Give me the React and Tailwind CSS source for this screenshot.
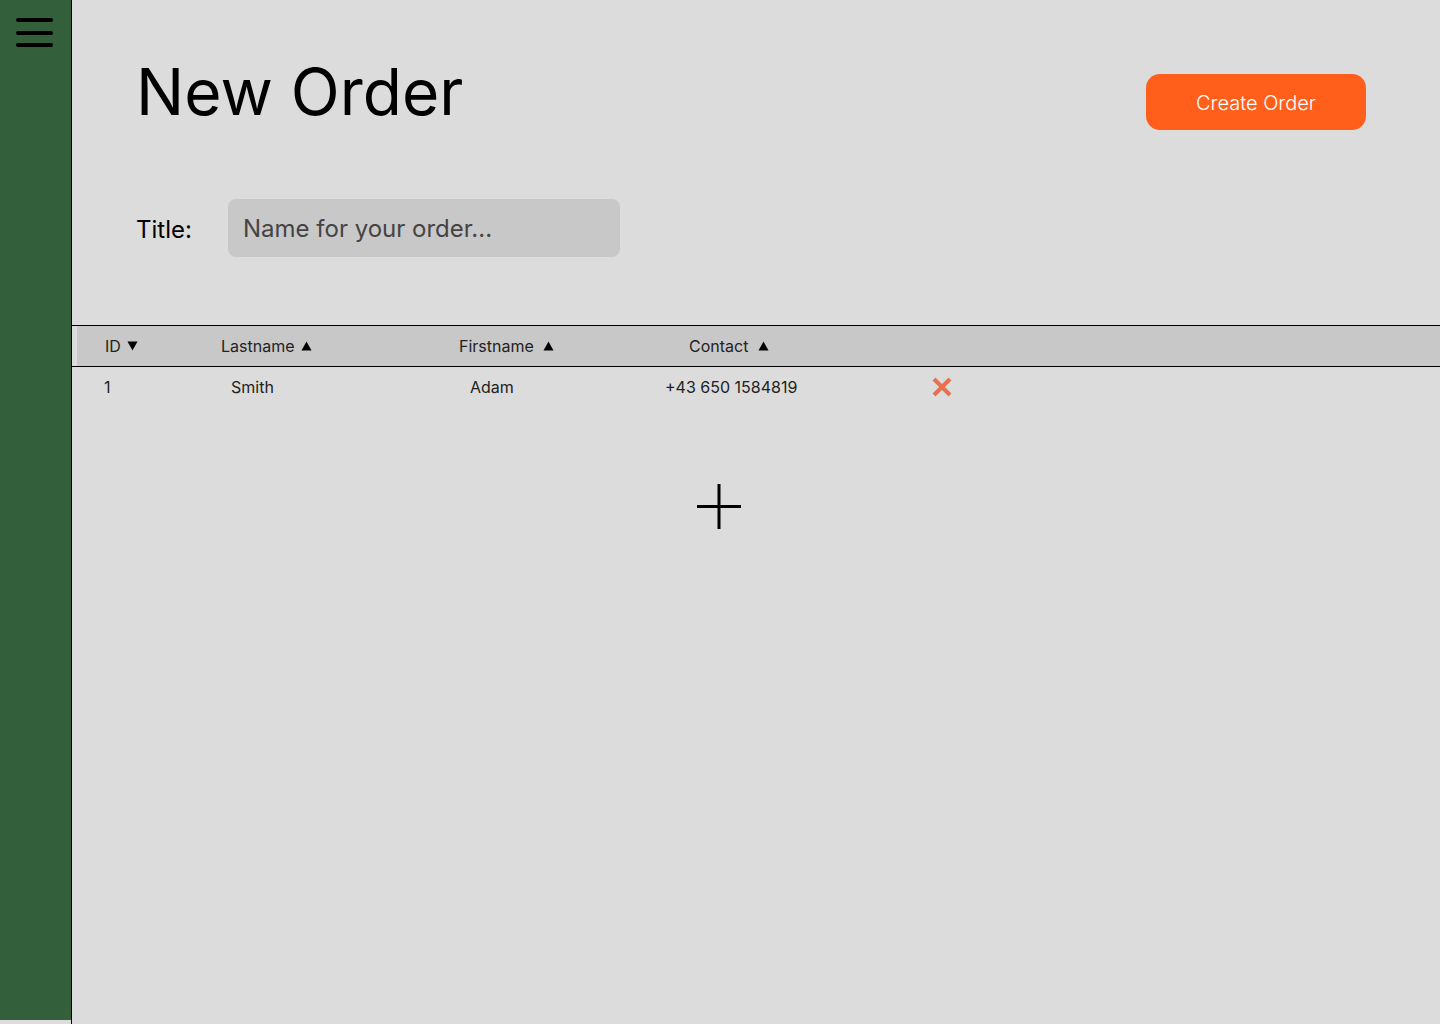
import React from "react";

function TriUp() {
  return (
    <svg width="11" height="10" viewBox="0 0 11 10" className="inline-block">
      <path d="M5.5 0.5 L10.5 9.5 L0.5 9.5 Z" fill="#000" />
    </svg>
  );
}

function TriDown() {
  return (
    <svg width="11" height="10" viewBox="0 0 11 10" className="inline-block">
      <path d="M0.5 0.5 L10.5 0.5 L5.5 9.5 Z" fill="#000" />
    </svg>
  );
}

export default function App() {
  return (
    <div
      className="flex h-[1024px] w-[1440px] overflow-hidden bg-[#dcdcdc] text-black"
      style={{ fontFamily: "Inter, 'Noto Sans', sans-serif" }}
    >
      <aside className="h-[1020px] w-[71px] shrink-0 bg-[#33603a] pt-[18px] pl-[16px]">
        <button type="button" aria-label="Menu" className="flex flex-col gap-[8.5px]">
          <span className="block h-[4px] w-[37px] rounded-full bg-black" />
          <span className="block h-[4px] w-[37px] rounded-full bg-black" />
          <span className="block h-[4px] w-[37px] rounded-full bg-black" />
        </button>
      </aside>

      <main className="flex-1 border-l border-black">
        <div className="flex items-start justify-between pl-[64px] pr-[74px] pt-[54px]">
          <h1 className="text-[64px] font-normal leading-[76px]">New Order</h1>
          <button
            type="button"
            className="mt-[20px] h-[56px] w-[220px] rounded-[14px] bg-[#ff5f1a] pt-[2px] text-[20px] font-light text-white"
          >
            Create Order
          </button>
        </div>

        <div className="mt-[69px] flex items-center pl-[64px]">
          <label className="w-[92px] pt-[3px] text-[24px]">Title:</label>
          <input
            type="text"
            placeholder="Name for your order..."
            className="h-[58px] w-[392px] rounded-[8px] bg-[#c8c8c8] px-[15px] text-[24px] outline-none placeholder:text-[#444]"
          />
        </div>

        <div className="mt-[68px] border-t border-b border-black">
          <div className="ml-[5px] flex h-[40px] items-center bg-[#c8c8c8] text-[16px] text-[#222]">
            <span className="ml-[28px] flex w-[116px] items-center gap-[6px]">
              ID <TriDown />
            </span>
            <span className="flex w-[238px] items-center gap-[6px]">
              Lastname <TriUp />
            </span>
            <span className="flex w-[230px] items-center gap-[9px]">
              Firstname <TriUp />
            </span>
            <span className="flex items-center gap-[10px]">
              Contact <TriUp />
            </span>
          </div>
        </div>

        <div className="flex h-[40px] items-center text-[16px] text-[#222]">
          <span className="ml-[32px] w-[127px]">1</span>
          <span className="w-[239px]">Smith</span>
          <span className="w-[195px]">Adam</span>
          <span className="w-[266px]">+43 650 1584819</span>
          <svg width="22" height="20" viewBox="0 0 22 20">
            <path d="M3 2 L19 18 M19 2 L3 18" stroke="#e8704f" strokeWidth="4" />
          </svg>
        </div>

        <div className="mt-[76px] flex pl-[624px]">
          <button type="button" aria-label="Add" className="block">
            <svg width="46" height="47" viewBox="0 0 46 47">
              <path d="M23 1 V46 M1 23.5 H45" stroke="#000" strokeWidth="3" />
            </svg>
          </button>
        </div>
      </main>
    </div>
  );
}
